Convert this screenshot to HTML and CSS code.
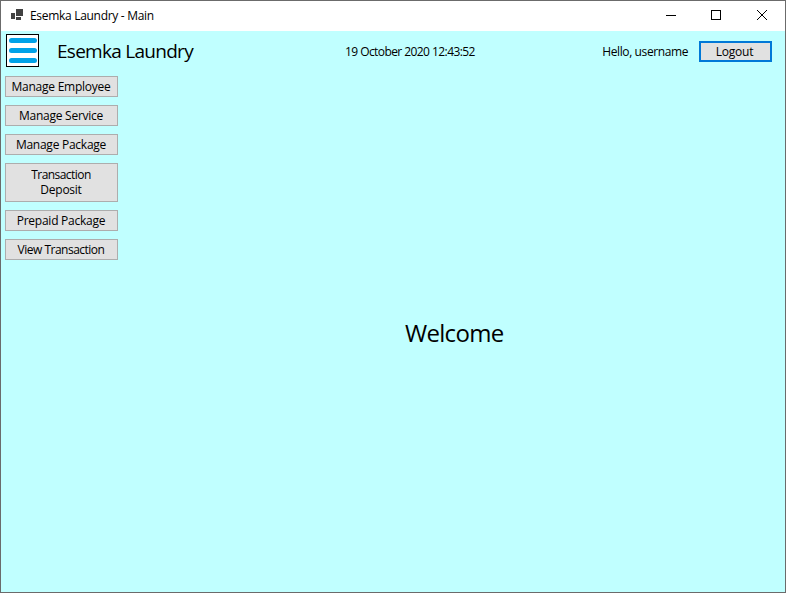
FILE: index.html
```html
<!DOCTYPE html>
<html lang="en">
<head>
<meta charset="utf-8">
<title>Esemka Laundry - Main</title>
<link rel="stylesheet" href="styles.css">
</head>
<body>
<div class="window">
  <header class="titlebar">
    <svg class="app-icon" width="12" height="11" viewBox="0 0 12 11" shape-rendering="crispEdges"><path fill="#424242" d="M0 4h4v6H0zM5 0h7v7H5zM5 8h5v3H5z"/></svg>
    <span class="caption">Esemka Laundry - Main</span>
    <div class="controls">
      <svg class="minimize" width="10" height="10" viewBox="0 0 10 10" shape-rendering="crispEdges"><path d="M0 5h10v1H0z"/></svg>
      <svg class="maximize" width="10" height="10" viewBox="0 0 10 10" shape-rendering="crispEdges"><path fill="none" stroke="#000" d="M.5 .5h9v9h-9z"/></svg>
      <svg width="10" height="10" viewBox="0 0 10 10"><path fill="none" stroke="#000" d="M0 0L10 10M10 0L0 10"/></svg>
    </div>
  </header>
  <div class="toolbar">
    <div class="menu">
      <svg width="31" height="31" viewBox="0 0 31 31"><path fill="none" stroke="#00a2e8" stroke-width="5" stroke-linecap="round" d="M4.5 5.5h23M4.5 15.5h23M4.5 25.5h23"/></svg>
    </div>
    <h1 class="brand">Esemka Laundry</h1>
    <span class="clock">19 October 2020 12:43:52</span>
    <span class="user">Hello, username</span>
    <button class="btn logout">Logout</button>
  </div>
  <div class="body">
    <nav class="side">
      <button class="btn">Manage Employee</button>
      <button class="btn">Manage Service</button>
      <button class="btn">Manage Package</button>
      <button class="btn tall"><span class="line">Transaction</span><span class="line">Deposit</span></button>
      <button class="btn">Prepaid Package</button>
      <button class="btn view">View Transaction</button>
    </nav>
    <main class="main"><p class="welcome">Welcome</p></main>
  </div>
</div>
</body>
</html>
```
FILE: styles.css
```css
* { box-sizing: border-box; }
body {
  margin: 0;
  font-family: "Open Sans", "Noto Sans", sans-serif;
  font-size: 12px;
  line-height: 15px;
  color: #000;
  white-space: nowrap;
}
svg { display: block; }
.window {
  width: 786px;
  height: 593px;
  border: 1px solid #6b6b6b;
  background: #c0ffff;
  display: flex;
  flex-direction: column;
  overflow: hidden;
}
.titlebar {
  height: 30px;
  background: #fff;
  display: flex;
  align-items: center;
  padding-left: 10px;
}
.app-icon { margin-right: 7px; margin-top: -3px; }
.caption { letter-spacing: -0.3px; margin-top: -1px; }
.controls {
  display: flex;
  margin-left: auto;
  margin-right: 18px;
  margin-top: -2px;
}
.minimize { margin-right: 35px; }
.maximize { margin-right: 36px; }
.toolbar {
  height: 41px;
  display: flex;
  align-items: center;
  padding: 0 13px 0 5px;
}
.menu {
  width: 33px;
  height: 33px;
  border: 1px solid #000;
  background: #fff;
  margin-top: -3px;
}
.brand {
  margin: -2px 0 0 18px;
  width: 288px;
  font-size: 19px;
  font-weight: 400;
  letter-spacing: -0.72px;
  line-height: 24px;
}
.clock { letter-spacing: -0.57px; }
.user { margin-left: auto; margin-right: 11px; letter-spacing: -0.4px; }
.btn {
  display: flex;
  align-items: center;
  justify-content: center;
  width: 113px;
  height: 21px;
  padding: 0 1px 0 0;
  border: 1px solid #adadad;
  background: #e1e1e1;
  color: #000;
  font: inherit;
  letter-spacing: -0.25px;
}
.logout { width: 73px; border: 2px solid #0078d7; padding-right: 2px; }
.tall {
  height: 39px;
  flex-direction: column;
  letter-spacing: -0.55px;
  padding-bottom: 1px;
}
.line { font-size: 12px; line-height: 15px; height: 15px; overflow: hidden; }
.line + .line { letter-spacing: -0.25px; }
.view { letter-spacing: -0.5px; }
.body { flex: 1; display: flex; }
.side {
  display: flex;
  flex-direction: column;
  gap: 8px;
  padding: 4px 0 0 4px;
}
.main { flex: 1; padding: 245px 0 0 287px; }
.welcome {
  margin: 0;
  font-size: 24px;
  letter-spacing: -0.7px;
  line-height: 32px;
}
```
